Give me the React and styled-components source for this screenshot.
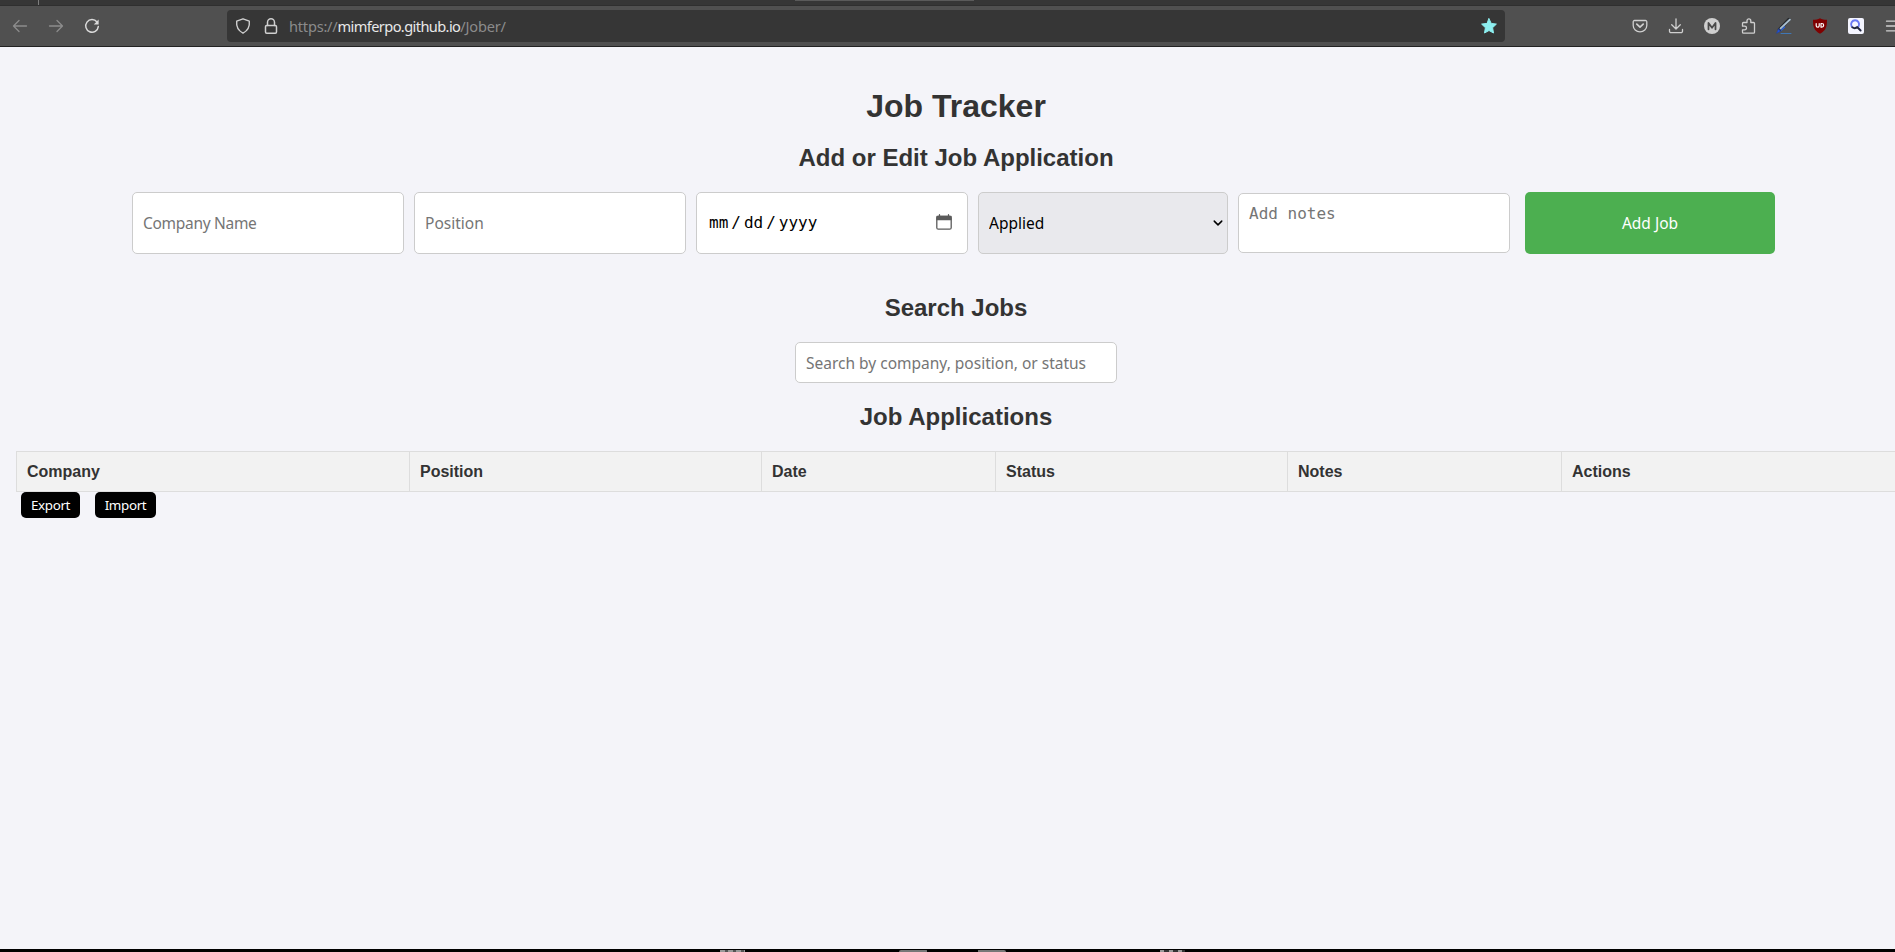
import React from "react";
import styled, { createGlobalStyle } from "styled-components";

const Global = createGlobalStyle`
  * { box-sizing: border-box; }
  html, body { margin: 0; padding: 0; overflow: hidden; background: #f4f4f9; }
  body { font-family: "Liberation Sans", Arial, sans-serif; color: #333; }
`;

const uiFont = `"Noto Sans", "Open Sans", sans-serif`;
const monoFont = `"DejaVu Sans Mono", "Liberation Mono", monospace`;

const Screen = styled.div`
  display: flex;
  flex-direction: column;
  width: 1895px;
  height: 952px;
  overflow: hidden;
`;

const TabStrip = styled.div`
  display: flex;
  flex: none;
  height: 5px;
  background: #363636;
`;
const TabDivider = styled.div`
  width: 1px;
  height: 5px;
  margin-left: 38px;
  background: #7d7d7d;
`;
const ActiveTab = styled.div`
  width: 179px;
  height: 1px;
  margin-left: 756px;
  background: #5a5a5a;
`;

const Toolbar = styled.header`
  display: flex;
  align-items: center;
  flex: none;
  height: 42px;
  border-top: 1px solid #2f2f2f;
  border-bottom: 1px solid #222;
  background: #505050;
  overflow: hidden;
`;
const NavButtons = styled.div`
  display: flex;
  flex: none;
  width: 227px;
  padding-left: 12px;
  gap: 20px;
`;
const Icon = styled.svg`
  display: block;
  flex: none;
  width: ${(p) => p.$size || 16}px;
  height: 16px;
  fill: none;
  stroke: ${(p) => p.$color || "#cfcfcf"};
  stroke-width: ${(p) => p.$weight || 1.3};
  stroke-linecap: round;
  stroke-linejoin: round;
  overflow: visible;
`;
const AddressBar = styled.div`
  display: flex;
  align-items: center;
  flex: none;
  width: 1278px;
  height: 32px;
  padding: 0 8px;
  border-radius: 4px;
  background: #363636;
`;
const SiteIcons = styled.div`
  display: flex;
  gap: 12px;
  width: 54px;
`;
const Url = styled.div`
  flex: 1;
  font: 14.6px/20px ${uiFont};
  letter-spacing: -0.22px;
  color: #8b8b8b;
  white-space: nowrap;
`;
const Host = styled.span`
  color: #e8e8e8;
  letter-spacing: -0.6px;
`;
const Extensions = styled.div`
  display: flex;
  flex: none;
  gap: 20px;
  padding-left: 127px;
`;

const Page = styled.main`
  flex: 1;
  padding: 36px 0 0 16px;
  overflow: hidden;
`;
const Title = styled.h1`
  width: 1880px;
  margin: 0;
  font-size: 32px;
  line-height: 46px;
  text-align: center;
`;
const SectionTitle = styled.h2`
  width: 1880px;
  margin: ${(p) => p.$top}px 0 0;
  font-size: 24px;
  line-height: 28px;
  text-align: center;
`;

const Form = styled.form`
  display: flex;
  align-items: center;
  gap: 10px;
  height: 62px;
  margin: 20px 0 0 116px;
`;
const fieldBox = `
  flex: none;
  height: 62px;
  padding: 0 10px;
  border: 1px solid #ccc;
  border-radius: 5px;
  outline: none;
  font: 15.5px/22px ${uiFont};
  color: #000;
  &::placeholder { color: #757575; opacity: 1; }
`;
const Field = styled.input`
  ${fieldBox}
  width: 272px;
  background: #fff;
  letter-spacing: ${(p) => p.$track || 0}px;
`;
const DateField = styled.div`
  ${fieldBox}
  display: flex;
  align-items: center;
  width: 272px;
  padding: 0 15px 0 12px;
  background: #fff;
`;
const DateParts = styled.div`
  display: flex;
  flex: 1;
  gap: 3px;
  font-family: ${monoFont};
  font-size: 16px;
`;
const CalendarButton = styled.span`
  padding-bottom: 3px;
`;
const StatusBox = styled.label`
  ${fieldBox}
  display: flex;
  align-items: center;
  width: 250px;
  padding: 0 4px 0 10px;
  background: #e9e9ed;
`;
const StatusSelect = styled.select`
  flex: 1;
  height: 60px;
  padding: 0;
  border: 0;
  outline: none;
  appearance: none;
  background: transparent;
  font: inherit;
  color: #000;
`;
const Notes = styled.textarea`
  ${fieldBox}
  width: 272px;
  height: 60px;
  padding: 10px;
  line-height: 19px;
  background: #fff;
  font-family: ${monoFont};
  font-size: 16px;
  resize: none;
`;
const AddButton = styled.button`
  flex: none;
  width: 250px;
  height: 62px;
  margin-left: 5px;
  border: 0;
  border-radius: 5px;
  background: #4caf50;
  color: #fff;
  font: 15.5px/22px ${uiFont};
`;

const SearchRow = styled.div`
  display: flex;
  justify-content: center;
  width: 1880px;
  margin-top: 20px;
`;
const SearchField = styled(Field)`
  width: 322px;
  height: 41px;
`;

const Table = styled.table`
  width: 1954px;
  margin-top: 20px;
  border-collapse: collapse;
  table-layout: fixed;
`;
const HeadCell = styled.th`
  width: ${(p) => p.$w}px;
  height: 40px;
  padding: 0 10px;
  border: 1px solid #ddd;
  background: #f2f2f2;
  font-size: 16px;
  line-height: 18px;
  text-align: left;
`;

const FileActions = styled.div`
  display: flex;
  gap: 15px;
  padding-left: 5px;
`;
const FileButton = styled.button`
  width: ${(p) => p.$w}px;
  height: 26px;
  padding: 0 0 1px;
  border: 0;
  border-radius: 5px;
  background: #000;
  color: #fff;
  font: 13.4px/20px ${uiFont};
  letter-spacing: -0.35px;
`;

const BottomEdge = styled.div`
  position: relative;
  flex: none;
  height: 3px;
  background: #000;
`;
const Speck = styled.div`
  position: absolute;
  top: 1px;
  left: ${(p) => p.$x}px;
  width: ${(p) => p.$w}px;
  height: 2px;
  border-radius: ${(p) => p.$r || "0"};
  background: ${(p) => p.$bg || "#777"};
`;

const columns = [
  ["Company", 393],
  ["Position", 352],
  ["Date", 234],
  ["Status", 292],
  ["Notes", 274],
  ["Actions", 409],
];

export default function App() {
  return (
    <Screen>
      <Global />
      <TabStrip>
        <TabDivider />
        <ActiveTab />
      </TabStrip>
      <Toolbar>
        <NavButtons>
          <Icon viewBox="0 0 16 16" $color="#8c8c8c"><path d="M14.5 8H1.5M7 2.5 1.5 8 7 13.5" /></Icon>
          <Icon viewBox="0 0 16 16" $color="#8c8c8c"><path d="M1.5 8h13M9 2.5 14.5 8 9 13.5" /></Icon>
          <Icon viewBox="0 0 16 16" $color="#dadada" $weight={1.5}>
            <path d="M13 4A6.3 6.3 0 1 0 14.3 8.6" />
            <path d="M14.6 1.500v4.900H9.800z" fill="#dadada" stroke="none" />
          </Icon>
        </NavButtons>
        <AddressBar>
          <SiteIcons>
            <Icon viewBox="0 0 16 16" $weight={1.4}>
              <path d="M8 .8 14.3 3.200c.6 5.400-1.700 9.600-6.300 12C3.400 12.800 1.100 8.600 1.700 3.200z" />
            </Icon>
            <Icon viewBox="0 0 16 16" $weight={1.5}>
              <rect x="2.5" y="7.5" width="11" height="7.700" rx="1.200" />
              <path d="M4.500 7.500V4.200a3.500 3.500 0 0 1 7 0v3.300" />
            </Icon>
          </SiteIcons>
          <Url>https://<Host>mimferpo.github.io</Host>/Jober/</Url>
          <Icon viewBox="0 0 16 16" $color="#8deff0" $weight={1}>
            <path fill="#8deff0" d="m8 .7 2.200 4.700 5.200.7-3.800 3.600.9 5.300L8 12.500 3.500 15l.9-5.300L.6 6.100l5.200-.7z" />
          </Icon>
        </AddressBar>
        <Extensions>
          <Icon viewBox="0 0 16 16">
            <path d="M2.500 2.500h11a1.300 1.300 0 0 1 1.300 1.300v3.700a6.800 6.300 0 0 1-13.600 0V3.800a1.300 1.300 0 0 1 1.300-1.300z" />
            <path d="M4.800 6.200 8 9.200l3.200-3" strokeWidth="1.700" />
          </Icon>
          <Icon viewBox="0 0 16 16">
            <path d="M8 .8v10M3.700 6.800 8 11l4.300-4.200M1.500 11.500v1.700a1.500 1.500 0 0 0 1.500 1.500h10a1.500 1.500 0 0 0 1.500-1.500v-1.700" />
          </Icon>
          <Icon viewBox="0 0 16 16">
            <circle cx="8" cy="8" r="8" fill="#cfcfcf" stroke="none" />
            <path d="M4.500 11.300V5l3.500 4.700L11.500 5v6.300" stroke="#4a4a4a" strokeWidth="1.800" />
          </Icon>
          <Icon viewBox="0 0 16 16">
            <path d="M2.500 8.200V5.500a1 1 0 0 1 1-1H7V2.700a1.900 1.900 0 0 1 3.800 0v1.800h2.700a1 1 0 0 1 1 1v8.700a1 1 0 0 1-1 1H3.500a1 1 0 0 1-1-1v-2.400h2.200a1.800 1.800 0 0 0 0-3.600z" />
          </Icon>
          <Icon viewBox="0 0 16 16">
            <path d="M5 15.500h10" stroke="#3f76b5" strokeWidth="1" />
            <path d="M3.500 11.500 13 1.500" stroke="#25272b" strokeWidth="3.400" />
            <path d="M4.500 10.500 14 1.500" stroke="#a8bdcc" strokeWidth="1.800" />
            <path d="m2.500 11-2 4.300 4-2z" fill="#2454d6" stroke="#1c3fa8" strokeWidth=".6" />
            <path d="m5.500 12 3-3" stroke="#2862de" strokeWidth="1.200" />
          </Icon>
          <Icon viewBox="0 0 16 16">
            <path d="M8 .2c2 1 4.300 1.600 7 1.600 0 7-.8 10.600-7 14-6.200-3.400-7-7-7-14C3.700 1.800 6 1.200 8 .2z" fill="#800000" stroke="none" />
            <path d="M4.200 5.500v2.200a1.500 1.500 0 0 0 3 0V5.500M9 5.500v3.700h.8a1.850 1.850 0 0 0 0-3.700z" stroke="#fff" strokeWidth="1.200" />
          </Icon>
          <Icon viewBox="0 0 16 16">
            <rect width="16" height="16" rx="2" fill="#f4f5ff" stroke="none" />
            <path d="M3.600 8.200a4 4 0 1 1 7 0" stroke="#6978f5" strokeWidth="1.900" />
            <path d="M4.300 9.300a4 4 0 0 0 5-.2l3.300 3.400" stroke="#20253f" strokeWidth="2" />
          </Icon>
          <Icon viewBox="0 0 16 16"><path d="M2.500 3.200h13M2.500 8h13M2.500 12.800h13" /></Icon>
        </Extensions>
      </Toolbar>

      <Page>
        <Title>Job Tracker</Title>
        <SectionTitle $top={15}>Add or Edit Job Application</SectionTitle>
        <Form onSubmit={(e) => e.preventDefault()}>
          <Field placeholder="Company Name" $track={-0.3} />
          <Field placeholder="Position" />
          <DateField>
            <DateParts>
              <span>mm</span>
              <span>/</span>
              <span>dd</span>
              <span>/</span>
              <span>yyyy</span>
            </DateParts>
            <CalendarButton>
              <Icon viewBox="0 0 16 16" $color="#5b5b5b">
                <rect x=".8" y="2.500" width="14.400" height="12.700" rx="1.500" />
                <path d="M1 2.500h14v3H1zM3.500 .7v2M12.500 .7v2" fill="#5b5b5b" />
              </Icon>
            </CalendarButton>
          </DateField>
          <StatusBox>
            <StatusSelect defaultValue="Applied">
              <option>Applied</option>
            </StatusSelect>
            <Icon viewBox="0 0 16 16" $size={10} $color="#000" $weight={2.4}>
              <path d="m2 5 6 6 6-6" />
            </Icon>
          </StatusBox>
          <Notes placeholder="Add notes" />
          <AddButton type="submit">Add Job</AddButton>
        </Form>

        <SectionTitle $top={40}>Search Jobs</SectionTitle>
        <SearchRow>
          <SearchField placeholder="Search by company, position, or status" />
        </SearchRow>

        <SectionTitle $top={20}>Job Applications</SectionTitle>
        <Table>
          <thead>
            <tr>
              {columns.map(([name, w]) => (
                <HeadCell key={name} $w={w}>{name}</HeadCell>
              ))}
            </tr>
          </thead>
        </Table>
        <FileActions>
          <FileButton $w={59}>Export</FileButton>
          <FileButton $w={61}>Import</FileButton>
        </FileActions>
      </Page>

      <BottomEdge>
        <Speck $x={720} $w={25} $bg="repeating-linear-gradient(90deg, #999 0 5px, #555 5px 8px)" />
        <Speck $x={899} $w={28} $r="10px 2px 0 0" />
        <Speck $x={978} $w={28} $r="0 10px 0 0" />
        <Speck $x={1160} $w={25} $bg="repeating-linear-gradient(90deg, #999 0 4px, #333 4px 9px)" />
      </BottomEdge>
    </Screen>
  );
}
